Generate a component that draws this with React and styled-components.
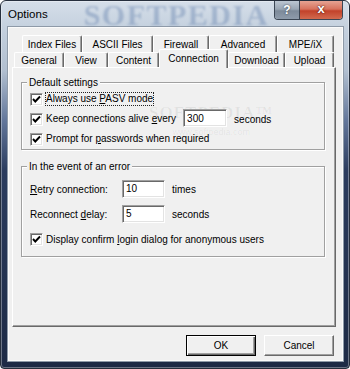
import styled, { createGlobalStyle } from 'styled-components'

const GlobalStyle = createGlobalStyle`
  html, body {
    margin: 0;
    padding: 0;
  }
  body {
    width: 350px;
    height: 369px;
    overflow: hidden;
    font-family: 'Liberation Sans', Arial, sans-serif;
  }
`

const topTabs = [
  { label: 'Index Files', width: 60 },
  { label: 'ASCII Files', width: 71 },
  { label: 'Firewall', width: 56 },
  { label: 'Advanced', width: 68 },
  { label: 'MPE/iX', width: 57 },
]

const bottomTabs = [
  { label: 'General', width: 50 },
  { label: 'View', width: 44 },
  { label: 'Content', width: 51 },
  { label: 'Connection', width: 69, active: true },
  { label: 'Download', width: 57 },
  { label: 'Upload', width: 49 },
]

function Check() {
  return (
    <CheckBox>
      <svg width='9' height='9' viewBox='0 0 9 9'>
        <path d='M1 4 L3.3 6.5 L8 1.5' fill='none' stroke='#000' strokeWidth='1.9' />
      </svg>
    </CheckBox>
  )
}

function App() {
  return (
    <>
      <GlobalStyle />
      <Window>
        <TitleBar>
          <Title>Options</Title>
          <Watermark>SOFTPEDIA</Watermark>
          <Controls>
            <HelpButton>?</HelpButton>
            <CloseButton>x</CloseButton>
          </Controls>
        </TitleBar>

        <Client>
          <TabRow $offset={8} $height={17}>
            {topTabs.map((t) => (
              <Tab key={t.label} $width={t.width}>
                {t.label}
              </Tab>
            ))}
          </TabRow>
          <TabRow $offset={0} $height={15}>
            {bottomTabs.map((t) => (
              <Tab key={t.label} $width={t.width} $active={t.active}>
                {t.label}
              </Tab>
            ))}
          </TabRow>

          <Panel>
            <PanelMark>
              <span>SOFTPEDIA™</span>
              <small>www.softpedia.com</small>
            </PanelMark>

            <Group>
              <Legend>Default settings</Legend>
              <CheckRow>
                <Check />
                <CheckLabel $focused>
                  Always use <u>P</u>ASV mode
                </CheckLabel>
              </CheckRow>
              <CheckRow>
                <Check />
                <CheckLabel>
                  Keep connections alive <u>e</u>very
                </CheckLabel>
                <Field $width={44}>300</Field>
                <Unit>seconds</Unit>
              </CheckRow>
              <CheckRow>
                <Check />
                <CheckLabel>
                  Prompt for <u>p</u>asswords when required
                </CheckLabel>
              </CheckRow>
            </Group>

            <Group $spaced>
              <Legend>In the event of an error</Legend>
              <FieldRow>
                <FieldLabel>
                  <u>R</u>etry connection:
                </FieldLabel>
                <Field $width={43}>10</Field>
                <Unit>times</Unit>
              </FieldRow>
              <FieldRow>
                <FieldLabel>
                  Reconnect <u>d</u>elay:
                </FieldLabel>
                <Field $width={43}>5</Field>
                <Unit>seconds</Unit>
              </FieldRow>
              <FieldRow>
                <Check />
                <CheckLabel>
                  Display confirm <u>l</u>ogin dialog for anonymous users
                </CheckLabel>
              </FieldRow>
            </Group>
          </Panel>

          <ButtonRow>
            <Button $default>OK</Button>
            <Button>Cancel</Button>
          </ButtonRow>
        </Client>
      </Window>
    </>
  )
}

export default App

const Window = styled.div`
  width: 350px;
  height: 369px;
  box-sizing: border-box;
  display: flex;
  flex-direction: column;
  border: 1px solid #262f3d;
  border-radius: 6px 6px 4px 4px;
  background: linear-gradient(
    180deg,
    #d5dee9 0px,
    #c4d0de 28px,
    #b1bfd0 70px,
    #62769a 120px,
    #2b3c5e 170px,
    #1d2a45 100%
  );
  box-shadow: inset 0 0 0 1px rgba(255, 255, 255, 0.35);
  overflow: hidden;
`

const TitleBar = styled.div`
  height: 26px;
  display: flex;
  align-items: flex-start;
`

const Title = styled.div`
  margin: 6px 0 0 7px;
  font-size: 11.5px;
  line-height: 14px;
  color: #000;
`

const Watermark = styled.div`
  margin-left: 36px;
  height: 26px;
  font-family: 'Liberation Serif', 'Times New Roman', serif;
  font-weight: bold;
  font-size: 30px;
  line-height: 28px;
  letter-spacing: 1.5px;
  color: rgba(70, 105, 160, 0.32);
  filter: blur(0.8px);
`

const Controls = styled.div`
  margin-left: auto;
  margin-right: 6px;
  display: flex;
  height: 18px;
  border: 1px solid #3b4654;
  border-top: none;
  border-radius: 0 0 4px 4px;
  overflow: hidden;
`

const HelpButton = styled.div`
  width: 24px;
  display: flex;
  align-items: center;
  justify-content: center;
  border-right: 1px solid #3b4654;
  background: linear-gradient(180deg, #bcc6d2 0%, #9aa6b4 45%, #7d8a9a 55%, #8e9bab 100%);
  color: #fff;
  font: bold 12px 'Liberation Sans', Arial, sans-serif;
  text-shadow: 0 0 2px #2a3340;
`

const CloseButton = styled.div`
  width: 42px;
  display: flex;
  align-items: center;
  justify-content: center;
  background: linear-gradient(180deg, #e6a393 0%, #d7725d 45%, #c2422a 55%, #d26a4f 100%);
  color: #fff;
  font: bold 13px 'Liberation Sans', Arial, sans-serif;
  line-height: 14px;
  padding-bottom: 2px;
  text-shadow: 0 0 2px #5a1a10, 0 0 1px #5a1a10;
`

const Client = styled.div`
  flex: 1;
  margin: 0 6px 7px 7px;
  box-sizing: border-box;
  border: 1px solid #fbfbfb;
  box-shadow: 0 0 0 1px #8e9aa8;
  background: #f0f0f0;
  padding: 7px 6px 0 3px;
  display: flex;
  flex-direction: column;
  font-size: 10px;
  color: #000;
`

const TabRow = styled.div`
  display: flex;
  align-items: flex-end;
  height: ${(p) => p.$height}px;
  padding-left: ${(p) => p.$offset + 2}px;
`

const Tab = styled.div`
  width: ${(p) => p.$width}px;
  height: ${(p) => (p.$active ? '19px' : '100%')};
  margin-bottom: ${(p) => (p.$active ? -1 : 0)}px;
  box-sizing: border-box;
  display: flex;
  align-items: center;
  justify-content: center;
  padding-bottom: ${(p) => (p.$active ? 2 : 0)}px;
  background: #f0f0f0;
  border-top: 1px solid #fff;
  border-left: 1px solid #fff;
  border-right: 1px solid #696969;
  border-radius: 2px 2px 0 0;
  box-shadow: inset -1px 0 0 #a0a0a0;
  position: relative;
  z-index: ${(p) => (p.$active ? 2 : 0)};
  white-space: nowrap;
  font-size: 10px;
`

const Panel = styled.div`
  position: relative;
  height: 260px;
  box-sizing: border-box;
  border-top: 1px solid #fff;
  border-left: 1px solid #fff;
  border-right: 1px solid #696969;
  border-bottom: 1px solid #696969;
  box-shadow: inset -1px -1px 0 #a0a0a0;
  padding: 8px 10px 0 8px;
`

const PanelMark = styled.div`
  position: absolute;
  left: 136px;
  top: 35px;
  display: flex;
  flex-direction: column;
  align-items: center;
  pointer-events: none;
  color: rgba(0, 0, 0, 0.06);

  span {
    font: bold 17px 'Liberation Serif', serif;
    letter-spacing: 1px;
  }

  small {
    margin-top: 4px;
    font-size: 9px;
  }
`

const Group = styled.fieldset`
  margin: ${(p) => (p.$spaced ? '10px' : '0')} 0 0 0;
  padding: ${(p) => (p.$spaced ? '4px 8px 4px' : '0 8px 0')};
  border: 1px solid #a0a0a0;
  box-shadow: inset 1px 1px 0 #fff, 1px 1px 0 #fff;
  position: relative;
  z-index: 1;
`

const Legend = styled.legend`
  margin-left: -3px;
  padding: 0 2px;
  line-height: 13px;
  font-size: 10px;
  background: #f0f0f0;
`

const CheckRow = styled.div`
  height: 20px;
  display: flex;
  align-items: center;
`

const FieldRow = styled.div`
  height: 25px;
  display: flex;
  align-items: center;
`

const CheckBox = styled.div`
  width: 13px;
  height: 13px;
  box-sizing: border-box;
  flex: none;
  background: #fff;
  border: 1px solid;
  border-color: #a0a0a0 #fff #fff #a0a0a0;
  box-shadow: inset 1px 1px 0 #696969, inset -1px -1px 0 #e3e3e3;
  display: flex;
  align-items: center;
  justify-content: center;
  margin-right: 2px;

  svg {
    display: block;
  }
`

const CheckLabel = styled.span`
  padding: 0;
  line-height: 12px;
  border: 1px dotted ${(p) => (p.$focused ? '#222' : 'transparent')};
  white-space: nowrap;
`

const FieldLabel = styled.span`
  width: 86px;
  white-space: nowrap;
`

const Field = styled.div`
  width: ${(p) => p.$width}px;
  height: 18px;
  box-sizing: border-box;
  margin: -2px 0 0 6px;
  padding: 0 3px;
  background: #fff;
  border: 1px solid;
  border-color: #a0a0a0 #fff #fff #a0a0a0;
  box-shadow: inset 1px 1px 0 #696969, inset -1px -1px 0 #e3e3e3;
  display: flex;
  align-items: center;
  font-size: 10px;
`

const Unit = styled.span`
  margin-left: 7px;
`

const ButtonRow = styled.div`
  display: flex;
  justify-content: flex-end;
  gap: 8px;
  margin-top: 8px;
  padding-right: 2px;
`

const Button = styled.div`
  width: 70px;
  height: 21px;
  box-sizing: border-box;
  display: flex;
  align-items: center;
  justify-content: center;
  background: #f0f0f0;
  border: 1px solid;
  border-color: ${(p) => (p.$default ? '#000' : '#fff #696969 #696969 #fff')};
  box-shadow: ${(p) =>
    p.$default
      ? 'inset 1px 1px 0 #fff, inset -1px -1px 0 #696969, inset -2px -2px 0 #a0a0a0'
      : 'inset -1px -1px 0 #a0a0a0'};
  font-size: 10px;
`
